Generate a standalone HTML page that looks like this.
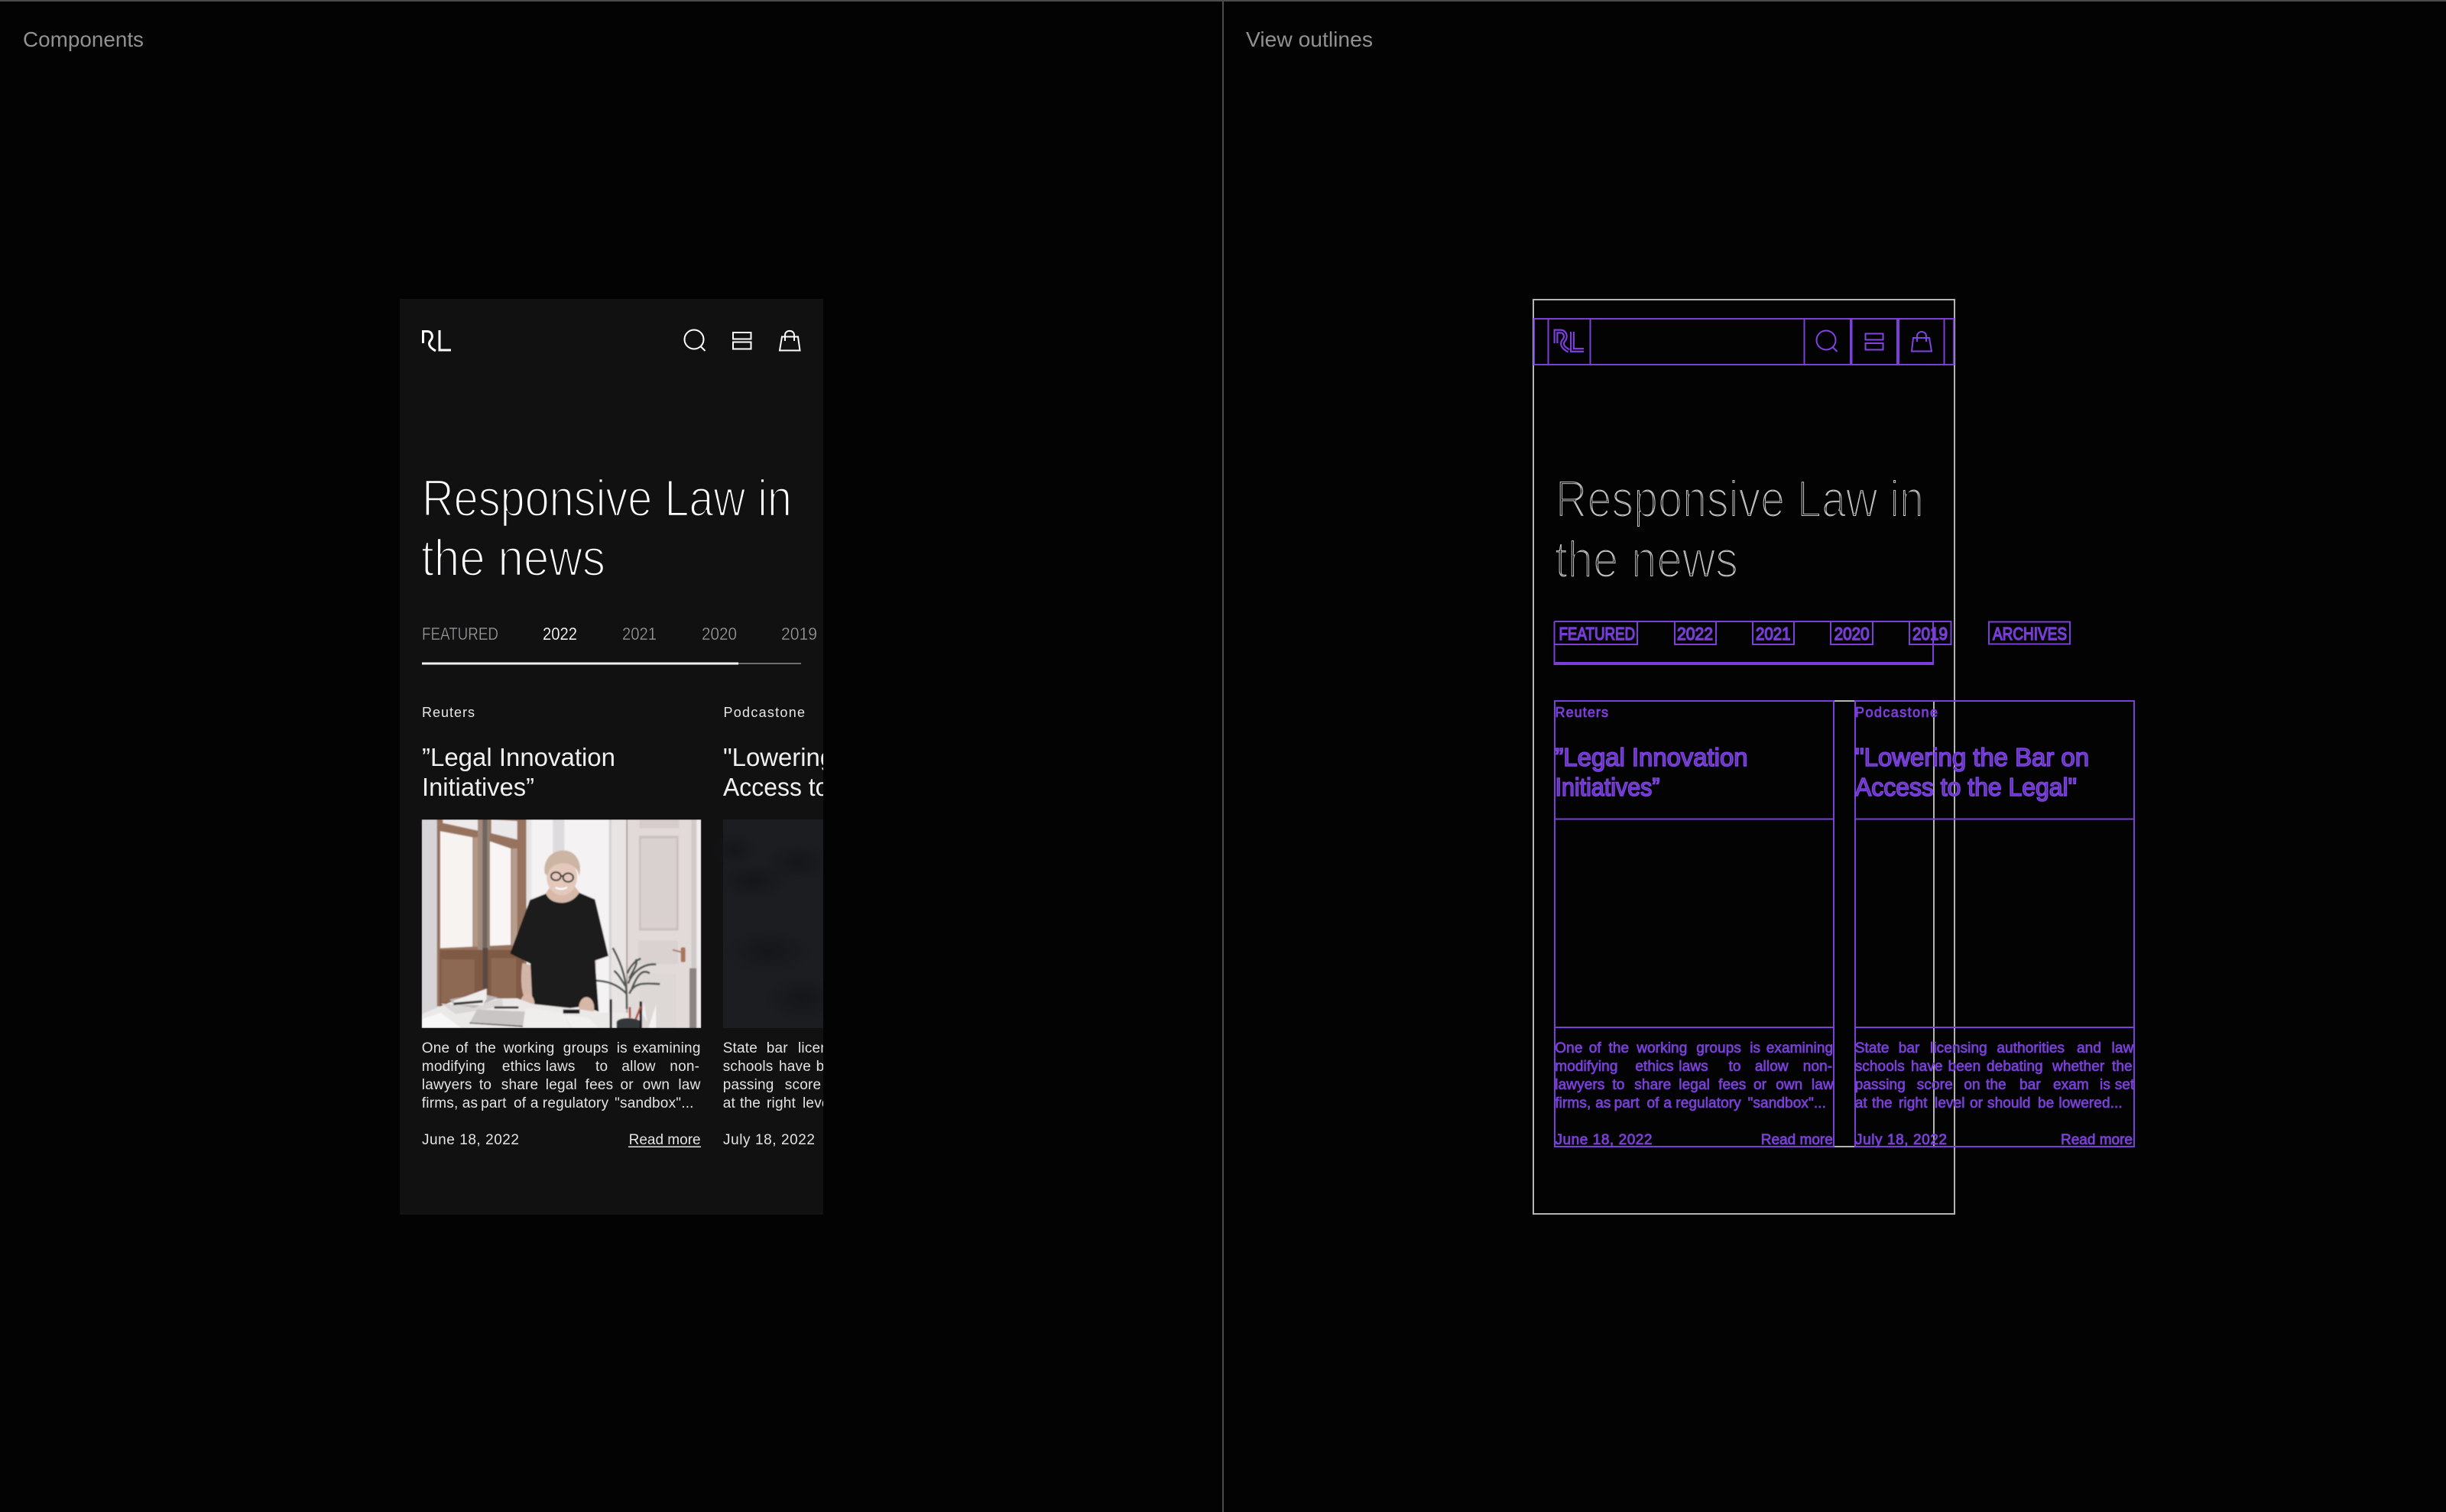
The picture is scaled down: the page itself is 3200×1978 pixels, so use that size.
<!DOCTYPE html>
<html><head><meta charset="utf-8"><title>Components</title>
<style>
html,body{margin:0;padding:0;background:#030303;width:3200px;height:1978px;overflow:hidden}
svg{display:block}
text{font-family:"Liberation Sans",Arial,sans-serif}
.lab{font-size:28px;fill:#919191}
.h1{font-size:68px;fill:#fff;stroke:#111;stroke-width:2.4px}
.h1o{font-size:68px;fill:#c4c4c4}
.tab{font-size:23px;fill:#9a9a9a;stroke:#111;stroke-width:.4px}
.tabon{font-size:23px;fill:#fff;stroke:#111;stroke-width:.2px}
.tabo{font-size:23px;fill:#7038d0;stroke:#7a3fd9;stroke-width:1.4px}
.src{font-size:18px;fill:#e6e6e6}
.t{font-size:33px;fill:#f0f0f0}
.b{font-size:19px;fill:#e4e4e4;letter-spacing:.2px}
.m{font-size:19px;fill:#e4e4e4}
.so{font-size:18px;fill:#7a3fd9;stroke:#7a3fd9;stroke-width:.8px}
.to{font-size:33px;fill:#5c30ae;stroke:#8044e4;stroke-width:1.6px}
.bo{font-size:19px;fill:#7a3fd9;stroke:#7a3fd9;stroke-width:.7px;letter-spacing:.1px}
.mo{font-size:19px;fill:#7a3fd9;stroke:#7a3fd9;stroke-width:.8px}
.p{fill:none;stroke:#7a3fd9;stroke-width:2}
.g{fill:none;stroke:#b4b4b4;stroke-width:2}
</style></head>
<body>
<svg width="3200" height="1978" viewBox="0 0 3200 1978" xmlns="http://www.w3.org/2000/svg">
<defs>
<clipPath id="panel"><rect x="523" y="391" width="554" height="1198"/></clipPath>
<clipPath id="ph"><rect x="65" y="36" width="1097" height="819"/></clipPath>
<filter id="soft" x="-5%" y="-5%" width="110%" height="110%"><feGaussianBlur stdDeviation="2.6"/></filter>
<radialGradient id="blot"><stop offset="0" stop-color="#131417" stop-opacity=".8"/><stop offset="1" stop-color="#131417" stop-opacity="0"/></radialGradient>
<filter id="ring" filterUnits="userSpaceOnUse" x="2000" y="600" width="560" height="190" color-interpolation-filters="sRGB">
<feMorphology in="SourceGraphic" operator="erode" radius="1" result="a"/>
<feMorphology in="SourceGraphic" operator="erode" radius="2" result="b"/>
<feComposite in="a" in2="b" operator="out"/>
</filter>
</defs>

<rect x="0" y="0" width="3200" height="2" fill="#4c4c4c"/>
<rect x="1599" y="0" width="2" height="1978" fill="#4c4c4c"/>
<text class="lab" x="30" y="61" textLength="158" lengthAdjust="spacingAndGlyphs">Components</text>
<text class="lab" x="1630" y="61" textLength="166" lengthAdjust="spacingAndGlyphs">View outlines</text>

<!-- LEFT PANEL -->
<rect x="523" y="391" width="554" height="1198" fill="#111112"/>
<g clip-path="url(#panel)">
<g fill="none" stroke="#fff" stroke-width="3">
<path d="M553.5 449V433.5H559C565.5 433.5 567 441 563.5 445C560 449 560.5 454 570 459"/>
<path d="M575 432V458H590"/>
</g>
<g fill="none" stroke="#fff" stroke-width="2">
<circle cx="908" cy="444" r="12.5"/>
<path d="M916.5 453L922.5 459"/>
<rect x="959" y="435" width="23.5" height="8.5"/>
<rect x="959" y="447.5" width="23.5" height="9"/>
<path d="M1023 440.5H1044L1046.5 458.5H1020Z"/>
<path d="M1027 446V438.5C1027 431 1039 431 1039 438.5V446"/>
</g>

<text class="h1" x="552" y="675" textLength="484" lengthAdjust="spacingAndGlyphs">Responsive Law in</text>
<text class="h1" x="551" y="753" textLength="241" lengthAdjust="spacingAndGlyphs">the news</text>

<text class="tab" x="552" y="837" textLength="100" lengthAdjust="spacingAndGlyphs">FEATURED</text>
<text class="tabon" x="710" y="837" textLength="45" lengthAdjust="spacingAndGlyphs">2022</text>
<text class="tab" x="814" y="837" textLength="45" lengthAdjust="spacingAndGlyphs">2021</text>
<text class="tab" x="918" y="837" textLength="46" lengthAdjust="spacingAndGlyphs">2020</text>
<text class="tab" x="1022" y="837" textLength="47" lengthAdjust="spacingAndGlyphs">2019</text>
<rect x="552" y="867" width="496" height="2" fill="#6f6f6f"/>
<rect x="552" y="866.5" width="414" height="3" fill="#f2f2f2"/>

<text class="src" x="552" y="938" textLength="69" lengthAdjust="spacing">Reuters</text>
<text class="t" x="552" y="1002" textLength="253" lengthAdjust="spacingAndGlyphs">”Legal Innovation</text>
<text class="t" x="552" y="1041" textLength="147" lengthAdjust="spacingAndGlyphs">Initiatives”</text>

<!-- photo -->
<g transform="translate(530,1060) scale(.33333)" clip-path="url(#ph)">
<g filter="url(#soft)">
<rect x="65" y="36" width="1097" height="819" fill="#f4f2f3"/>
<rect x="65" y="36" width="62" height="780" fill="#d6d4d7"/>
<!-- window frame -->
<path d="M125 36H476V770H125Z" fill="#97735e"/>
<path d="M138 82L265 106V535L138 541Z" fill="#f7f3f1"/>
<path d="M148 36H285V80L148 50Z" fill="#eeeaea"/>
<path d="M333 122L415 150V528L333 532Z" fill="#f8f5f4"/>
<path d="M338 36L440 42V115L338 90Z" fill="#ebe8e9"/>
<path d="M268 106H285V535H268Z" fill="#b39886"/>
<path d="M285 36H303V560H285Z" fill="#a08a7c"/>
<path d="M305 36H322V700H305Z" fill="#6d6662"/>
<path d="M322 36H333V560H322Z" fill="#93806f"/>
<path d="M418 150H440V530H418Z" fill="#b69c8c"/>
<path d="M135 548H465V770H135Z" fill="#7f5a45"/>
<rect x="142" y="585" width="130" height="170" fill="#8d6753"/>
<rect x="338" y="580" width="98" height="160" fill="#8d6753"/>
<rect x="305" y="540" width="20" height="160" fill="#5a4a42"/>
<rect x="476" y="36" width="20" height="330" fill="#e6e3e5"/>
<rect x="580" y="36" width="45" height="170" fill="#dddbdd"/>
<!-- door -->
<rect x="806" y="36" width="66" height="760" fill="#e8e4e4"/>
<rect x="800" y="36" width="10" height="760" fill="#d6d3d5"/>
<rect x="868" y="36" width="5" height="760" fill="#a7948d"/>
<rect x="873" y="36" width="250" height="819" fill="#e2dad8"/>
<rect x="920" y="36" width="155" height="34" fill="#d5cccb"/>
<rect x="918" y="100" width="155" height="372" fill="#cbc1bf"/>
<rect x="926" y="110" width="138" height="352" fill="#d9d1cf"/>
<rect x="915" y="512" width="155" height="92" fill="#d9d2d1"/>
<rect x="918" y="640" width="145" height="215" fill="#ddd7d6"/>
<rect x="1123" y="36" width="21" height="819" fill="#cfc9c9"/>
<rect x="1116" y="620" width="28" height="235" fill="#8a8482"/>
<rect x="1144" y="36" width="18" height="819" fill="#efecec"/>
<path d="M1050 548L1082 556" stroke="#a7745c" stroke-width="6" fill="none"/>
<rect x="1082" y="538" width="18" height="58" rx="5" fill="#a7745c"/>
<!-- plant -->
<g fill="none" stroke="#4d564e" stroke-width="8">
<path d="M870 780C870 700 870 640 815 540"/>
<path d="M870 720C830 680 790 670 745 668"/>
<path d="M880 720C900 670 950 680 1000 682"/>
<path d="M875 680C890 640 930 600 985 605"/>
<path d="M872 640C880 620 900 590 925 582"/>
<path d="M865 690C845 660 835 640 820 630"/>
<path d="M890 700C910 650 930 620 960 640"/>
<path d="M880 660C900 620 915 600 905 585"/>
</g>
<!-- woman -->
<path d="M460 600C450 680 460 720 470 740L470 775L500 790L505 700L510 610Z" fill="#d3b5a8"/>
<path d="M720 590C730 650 720 700 712 730L690 770L735 800L745 720L750 590Z" fill="#d3b5a8"/>
<path d="M556 326L490 352L412 562L492 602L500 770L620 780L700 770L760 790L745 590L798 572L745 350L680 322C660 372 580 378 556 326Z" fill="#1c1a1a"/>
<path d="M552 326C570 376 655 376 684 322L655 285H580Z" fill="#d8b8a9"/>
<ellipse cx="615" cy="262" rx="60" ry="72" fill="#e3c8bb"/>
<path d="M548 248C540 195 575 156 625 158C670 160 696 205 684 256C675 225 655 208 620 208C595 208 568 218 558 256Z" fill="#cdb5a4"/>
<g fill="none" stroke="#2e2b2b" stroke-width="6">
<ellipse cx="592" cy="259" rx="19" ry="16"/><ellipse cx="640" cy="264" rx="20" ry="17"/><path d="M610 258H622"/>
</g>
<path d="M590 303C605 312 625 310 635 302" fill="none" stroke="#fff" stroke-width="7"/>
<ellipse cx="480" cy="760" rx="28" ry="40" fill="#d7b7a8"/>
<ellipse cx="712" cy="775" rx="30" ry="42" fill="#d7b7a8"/>
<!-- table -->
<path d="M65 800L210 740L440 738L500 760L680 780L770 795H880V855H65Z" fill="#ebe8e8"/>
<path d="M65 820L140 795L220 855H65Z" fill="#f8f7f7"/>
<!-- books -->
<path d="M140 758L200 800L385 768L380 740L250 770Z" fill="#d9d6d6"/>
<path d="M175 742L300 720L365 735L270 775L190 760Z" fill="#bcb6b4"/>
<path d="M190 748L320 700L320 740L305 765L190 763Z" fill="#efecec"/>
<path d="M190 755L305 745L305 755L190 765Z" fill="#3b3535"/>
<path d="M350 770H445V778H350Z" fill="#2b2929"/>
<!-- laptop / papers -->
<path d="M282 782L470 790L462 850L252 838Z" fill="#c9c5c5"/>
<path d="M252 836L462 850V846L252 833Z" fill="#252323"/>
<path d="M474 775L620 795L650 855H462Z" fill="#f0eded"/>
<path d="M630 805L720 815L762 855H655Z" fill="#f2efef"/>
<path d="M620 782H685V798H620Z" fill="#1b1a1a"/>
<!-- desk items -->
<rect x="803" y="742" width="9" height="113" fill="#1b1a1a"/>
<path d="M830 830C840 810 910 812 925 830V855H830Z" fill="#35393a"/>
<path d="M920 750H930V855H920Z" fill="#1d1d1d"/>
<path d="M882 772V815M925 770L905 820" stroke="#b04a3e" stroke-width="8" fill="none"/>
<path d="M985 760L955 855H985Z" fill="#f4f2f2"/>
<path d="M938 755L930 800L950 830Z" fill="#eee"/>
</g>
</g>

<!-- second card, left -->
<text class="src" x="946.5" y="938" textLength="106.5" lengthAdjust="spacing">Podcastone</text>
<text class="t" x="946" y="1002" textLength="306" lengthAdjust="spacingAndGlyphs">"Lowering the Bar on</text>
<text class="t" x="946" y="1041" textLength="290" lengthAdjust="spacingAndGlyphs">Access to the Legal"</text>
<rect x="946" y="1072" width="140" height="273" fill="#1c1d21"/>
<ellipse cx="960" cy="1112" rx="32" ry="22" fill="url(#blot)"/>
<ellipse cx="985" cy="1152" rx="50" ry="24" fill="url(#blot)"/>
<ellipse cx="1045" cy="1128" rx="45" ry="24" fill="url(#blot)"/>
<ellipse cx="1005" cy="1245" rx="58" ry="28" fill="url(#blot)"/>
<ellipse cx="1050" cy="1307" rx="50" ry="30" fill="url(#blot)"/>

<!-- body text card 1 -->
<text class="b" y="1377"><tspan x="551.8">One</tspan><tspan x="596.2">of</tspan><tspan x="622">the</tspan><tspan x="658.7">working</tspan><tspan x="736.8">groups</tspan><tspan x="806.7">is</tspan><tspan x="828.2">examining</tspan></text>
<text class="b" y="1401"><tspan x="551.8">modifying</tspan><tspan x="656.9">ethics</tspan><tspan x="713.8">laws</tspan><tspan x="779">to</tspan><tspan x="813.4">allow</tspan><tspan x="876.3">non-</tspan></text>
<text class="b" y="1425"><tspan x="551.8">lawyers</tspan><tspan x="626.9">to</tspan><tspan x="655.8">share</tspan><tspan x="713.8">legal</tspan><tspan x="765.6">fees</tspan><tspan x="811.5">or</tspan><tspan x="840.7">own</tspan><tspan x="887.4">law</tspan></text>
<text class="b" y="1449"><tspan x="551.8">firms,</tspan><tspan x="604.7">as</tspan><tspan x="629.1">part</tspan><tspan x="672">of</tspan><tspan x="693.9">a</tspan><tspan x="709.8">regulatory</tspan><tspan x="804.1">"sandbox"...</tspan></text>
<text class="m" x="552" y="1497" textLength="127" lengthAdjust="spacing">June 18, 2022</text>
<text class="m" x="822.6" y="1497" textLength="94" lengthAdjust="spacing">Read more</text>
<rect x="822" y="1499.5" width="95" height="1.5" fill="#e4e4e4"/>

<!-- body text card 2 -->
<text class="b" y="1377"><tspan x="945.7">State</tspan><tspan x="1002.7">bar</tspan><tspan x="1044">licensing</tspan><tspan x="1131.4">authorities</tspan></text>
<text class="b" y="1401"><tspan x="945.7">schools</tspan><tspan x="1019">have</tspan><tspan x="1067.6">been</tspan></text>
<text class="b" y="1425"><tspan x="945.7">passing</tspan><tspan x="1026.8">score</tspan><tspan x="1088.4">on</tspan></text>
<text class="b" y="1449"><tspan x="945.7">at</tspan><tspan x="968">the</tspan><tspan x="1003">right</tspan><tspan x="1050">level</tspan></text>
<text class="m" x="946" y="1497" textLength="120" lengthAdjust="spacing">July 18, 2022</text>
</g>

<!-- RIGHT OUTLINES -->
<rect class="g" x="2006" y="392" width="551" height="1196"/>
<path class="g" d="M2399 917H2427M2399 1500H2427M2530 917V1500"/>
<!-- header boxes -->
<rect class="p" x="2007" y="417" width="549" height="60"/>
<path class="p" d="M2025.5 417V477M2080.5 417V477M2360.5 417V477M2421 417V477M2422.5 417V477M2482 417V477M2484 417V477M2543.5 417V477"/>
<g fill="none" stroke="#7a3fd9" stroke-linejoin="miter">
<path stroke-width="6" d="M2035.5 449V433.5H2041.5C2048 433.5 2049.5 441 2046 445C2042.5 449 2043 454 2052.5 459"/>
<path stroke-width="6" d="M2057 434V458H2072"/>
</g>
<g fill="none" stroke="#050505" stroke-width="1.6">
<path d="M2035.5 449V433.5H2041.5C2048 433.5 2049.5 441 2046 445C2042.5 449 2043 454 2052.5 459"/>
<path d="M2057 434V458H2072"/>
</g>
<g fill="none" stroke="#7f44e0" stroke-width="2">
<circle cx="2389" cy="445" r="12.5"/>
<path d="M2397.5 454L2403.5 460"/>
<rect x="2440.5" y="436.5" width="23" height="8"/>
<rect x="2440.5" y="449" width="23" height="8.5"/>
<path d="M2503 442H2524L2527 459.5H2501Z"/>
<path d="M2508 447V440C2508 432 2520 432 2520 440V447"/>
</g>
<!-- title -->
<g filter="url(#ring)">
<text class="h1o" x="2035" y="676" textLength="482" lengthAdjust="spacingAndGlyphs">Responsive Law in</text>
<text class="h1o" x="2034" y="755" textLength="240" lengthAdjust="spacingAndGlyphs">the news</text>
</g>
<!-- tabs -->
<path class="p" d="M2033.5 813H2552.5V843H2498V813M2033.5 813V869H2529V813M2142 813V843H2033.5M2191 813V843H2245V813M2293 813V843H2347V813M2395 813V843H2450V813"/>
<rect class="p" x="2602" y="813.5" width="106" height="29"/>
<rect x="2033.5" y="866" width="495.5" height="4" fill="#7a3fd9"/>
<text class="tabo" x="2039.5" y="837" textLength="99.5" lengthAdjust="spacingAndGlyphs">FEATURED</text>
<text class="tabo" x="2194" y="837" textLength="47" lengthAdjust="spacingAndGlyphs">2022</text>
<text class="tabo" x="2297" y="837" textLength="45.5" lengthAdjust="spacingAndGlyphs">2021</text>
<text class="tabo" x="2399.6" y="837" textLength="46" lengthAdjust="spacingAndGlyphs">2020</text>
<text class="tabo" x="2502" y="837" textLength="46" lengthAdjust="spacingAndGlyphs">2019</text>
<text class="tabo" x="2607" y="837" textLength="97" lengthAdjust="spacingAndGlyphs">ARCHIVES</text>
<!-- card boxes -->
<rect class="p" x="2034" y="917" width="365" height="583"/>
<path class="p" d="M2034 1071.5H2399M2034 1344H2399"/>
<rect class="p" x="2427" y="917" width="365" height="583"/>
<path class="p" d="M2427 1071.5H2792M2427 1344H2792"/>

<text class="so" x="2034.5" y="938" textLength="69.5" lengthAdjust="spacing">Reuters</text>
<text class="to" x="2034.5" y="1002" textLength="252" lengthAdjust="spacingAndGlyphs">”Legal Innovation</text>
<text class="to" x="2034.5" y="1041" textLength="137" lengthAdjust="spacingAndGlyphs">Initiatives”</text>
<text class="bo" y="1377"><tspan x="2034.3">One</tspan><tspan x="2078.7">of</tspan><tspan x="2104.5">the</tspan><tspan x="2141.2">working</tspan><tspan x="2219.3">groups</tspan><tspan x="2289.2">is</tspan><tspan x="2310.7">examining</tspan></text>
<text class="bo" y="1401"><tspan x="2034.3">modifying</tspan><tspan x="2139.4">ethics</tspan><tspan x="2196.3">laws</tspan><tspan x="2261.5">to</tspan><tspan x="2295.9">allow</tspan><tspan x="2358.8">non-</tspan></text>
<text class="bo" y="1425"><tspan x="2034.3">lawyers</tspan><tspan x="2109.4">to</tspan><tspan x="2138.3">share</tspan><tspan x="2196.3">legal</tspan><tspan x="2248.1">fees</tspan><tspan x="2294">or</tspan><tspan x="2323.2">own</tspan><tspan x="2369.9">law</tspan></text>
<text class="bo" y="1449"><tspan x="2034.3">firms,</tspan><tspan x="2087.2">as</tspan><tspan x="2111.6">part</tspan><tspan x="2154.5">of</tspan><tspan x="2176.4">a</tspan><tspan x="2192.3">regulatory</tspan><tspan x="2286.6">"sandbox"...</tspan></text>
<text class="mo" x="2034.5" y="1497" textLength="127" lengthAdjust="spacing">June 18, 2022</text>
<text class="mo" x="2303.8" y="1497" textLength="94" lengthAdjust="spacing">Read more</text>

<text class="so" x="2427" y="938" textLength="108" lengthAdjust="spacing">Podcastone</text>
<text class="to" x="2427" y="1002" textLength="306" lengthAdjust="spacingAndGlyphs">"Lowering the Bar on</text>
<text class="to" x="2427" y="1041" textLength="290" lengthAdjust="spacingAndGlyphs">Access to the Legal"</text>
<text class="bo" y="1377"><tspan x="2426.7">State</tspan><tspan x="2483.7">bar</tspan><tspan x="2525">licensing</tspan><tspan x="2612.4">authorities</tspan><tspan x="2717">and</tspan><tspan x="2762.5">law</tspan></text>
<text class="bo" y="1401"><tspan x="2426.7">schools</tspan><tspan x="2500">have</tspan><tspan x="2548.6">been</tspan><tspan x="2599">debating</tspan><tspan x="2685">whether</tspan><tspan x="2763">the</tspan></text>
<text class="bo" y="1425"><tspan x="2426.7">passing</tspan><tspan x="2507.8">score</tspan><tspan x="2569.4">on</tspan><tspan x="2598">the</tspan><tspan x="2642">bar</tspan><tspan x="2686">exam</tspan><tspan x="2747">is</tspan><tspan x="2766.7">set</tspan></text>
<text class="bo" y="1449"><tspan x="2426.7">at</tspan><tspan x="2449">the</tspan><tspan x="2484">right</tspan><tspan x="2531">level</tspan><tspan x="2577">or</tspan><tspan x="2600">should</tspan><tspan x="2666">be</tspan><tspan x="2693.4">lowered...</tspan></text>
<text class="mo" x="2427" y="1497" textLength="120" lengthAdjust="spacing">July 18, 2022</text>
<text class="mo" x="2696" y="1497" textLength="94" lengthAdjust="spacing">Read more</text>
</svg>
</body></html>
